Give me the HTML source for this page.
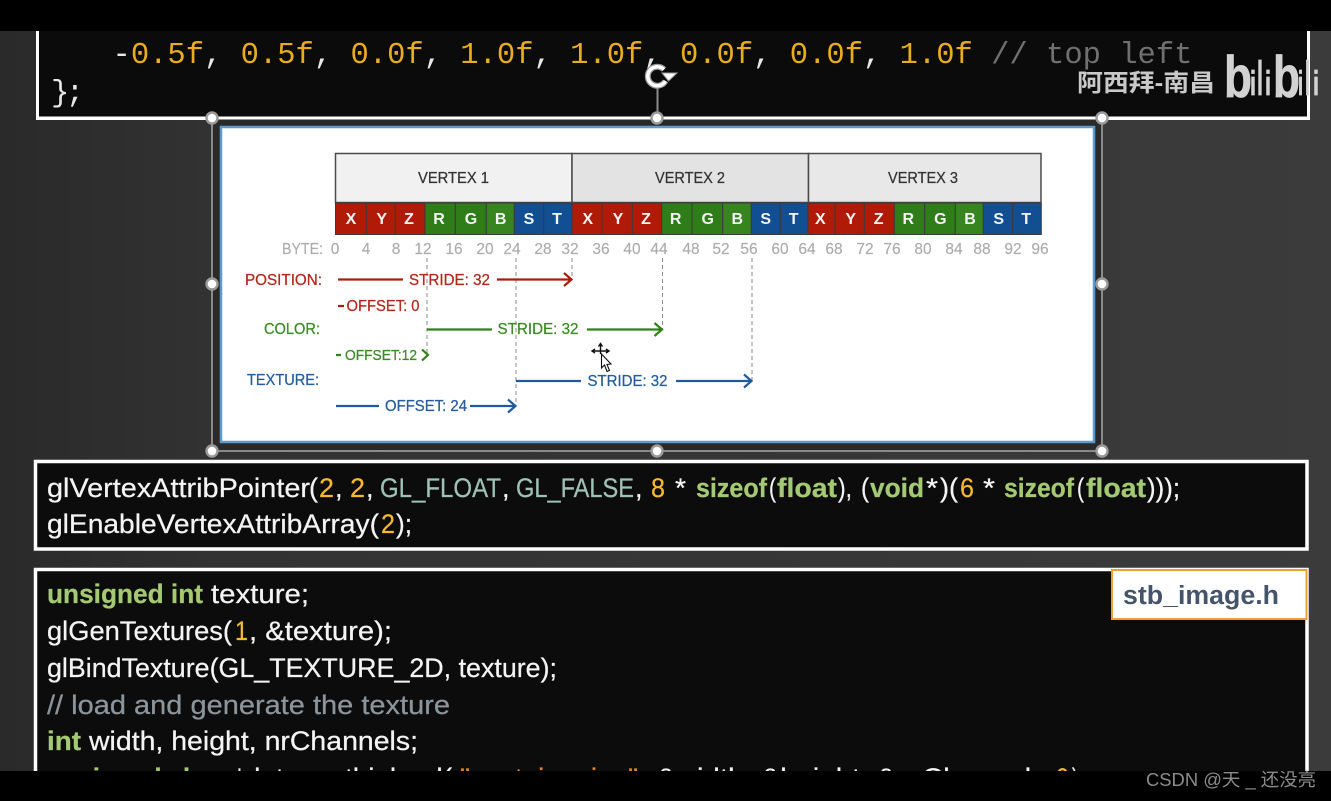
<!DOCTYPE html>
<html>
<head>
<meta charset="utf-8">
<style>
html,body{margin:0;padding:0;width:1331px;height:801px;overflow:hidden;background:#000}
svg{display:block}
text{font-family:"Liberation Sans","Noto Sans CJK SC",sans-serif}
.c text{font-size:27px;fill:#f4f4f4;stroke:#f4f4f4;stroke-width:.25}
.c text.o{fill:#f5b82e;stroke:#f5b82e}
.c text.g{fill:#a4c973;stroke:#a4c973;font-weight:bold}
.c text.t{fill:#9fc2b5;stroke:#9fc2b5}
.c text.gray{fill:#8b959c;stroke:#8b959c}
.c text.s{fill:#f08a1e;stroke:#f08a1e}
.m text{font-family:"Liberation Mono",monospace;font-size:30.5px}
.cell{font-size:16px;font-weight:bold;fill:#f4f4f4;text-anchor:middle}
.b text{font-size:15.5px;fill:#ababab;stroke:#ababab;stroke-width:.15;text-anchor:middle}
.l{font-size:15.5px}
.lg text{stroke-width:.25}
.h{fill:#fff;stroke:#9a9a9a;stroke-width:2.4}
.bl text{font-weight:bold;fill:#d2d2d2;stroke:#d2d2d2;stroke-width:.8}
</style>
</head>
<body>
<svg width="1331" height="801" viewBox="0 0 1331 801" xmlns="http://www.w3.org/2000/svg">
<defs>
<linearGradient id="bg" x1="0" x2="1" y1="0" y2="0">
<stop offset="0" stop-color="#2a2a2a"/><stop offset=".16" stop-color="#323232"/><stop offset="1" stop-color="#3b3b3b"/>
</linearGradient>
</defs>
<rect width="1331" height="801" fill="url(#bg)"/>

<!-- top panel -->
<rect x="37.500" y="20" width="1271" height="98.500" fill="#0b0b0b" stroke="#fff" stroke-width="3"/>
<g class="m">
<text x="112.500" y="63" xml:space="preserve"><tspan fill="#e8e8e8">-</tspan><tspan fill="#e8ac1c">0.5f</tspan><tspan fill="#e8e8e8">, </tspan><tspan fill="#e8ac1c">0.5f</tspan><tspan fill="#e8e8e8">, </tspan><tspan fill="#e8ac1c">0.0f</tspan><tspan fill="#e8e8e8">, </tspan><tspan fill="#e8ac1c">1.0f</tspan><tspan fill="#e8e8e8">, </tspan><tspan fill="#e8ac1c">1.0f</tspan><tspan fill="#e8e8e8">, </tspan><tspan fill="#e8ac1c">0.0f</tspan><tspan fill="#e8e8e8">, </tspan><tspan fill="#e8ac1c">0.0f</tspan><tspan fill="#e8e8e8">, </tspan><tspan fill="#e8ac1c">1.0f</tspan><tspan fill="#707070"> // top left</tspan></text>
<text x="51" y="101" fill="#e8e8e8" textLength="33" lengthAdjust="spacing">};</text>
</g>
<text x="1077" y="91" font-size="24" font-weight="bold" fill="#c9c9c9" textLength="138" lengthAdjust="spacingAndGlyphs">阿西拜-南昌</text>
<g class="bl">
<text x="1224" y="97" font-size="58" textLength="28" lengthAdjust="spacingAndGlyphs">b</text>
<text x="1250" y="95" font-size="34" textLength="6" lengthAdjust="spacingAndGlyphs">i</text>
<text x="1257" y="95" font-size="48" textLength="6" lengthAdjust="spacingAndGlyphs">l</text>
<text x="1265" y="95" font-size="34" textLength="6" lengthAdjust="spacingAndGlyphs">i</text>
<text x="1273" y="97" font-size="58" textLength="27" lengthAdjust="spacingAndGlyphs">b</text>
<text x="1298" y="95" font-size="34" textLength="5" lengthAdjust="spacingAndGlyphs">i</text>
<text x="1305" y="95" font-size="48" textLength="5" lengthAdjust="spacingAndGlyphs">l</text>
<text x="1313" y="95" font-size="34" textLength="6" lengthAdjust="spacingAndGlyphs">i</text>
</g>

<!-- selection band -->
<rect x="212" y="118" width="890" height="333" fill="#2a2a2a" stroke="#8a8a8a" stroke-width="2"/>
<rect x="37" y="116.500" width="1272" height="3" fill="#fff"/>
<rect x="221" y="127" width="873" height="315" fill="#fff" stroke="#5b9bd0" stroke-width="2.500"/>

<!-- diagram -->
<rect x="335.500" y="153.500" width="236.500" height="49" fill="#f1f1f1" stroke="#4a4a4a" stroke-width="1.500"/>
<rect x="572" y="153.500" width="236.500" height="49" fill="#e3e3e3" stroke="#4a4a4a" stroke-width="1.500"/>
<rect x="808.500" y="153.500" width="232.500" height="49" fill="#e8e8e8" stroke="#4a4a4a" stroke-width="1.500"/>
<g class="lg" stroke="#333">
<text x="418" y="183" font-size="16" fill="#333" stroke-width=".2" textLength="71" lengthAdjust="spacingAndGlyphs">VERTEX 1</text>
<text x="655" y="183" font-size="16" fill="#333" stroke-width=".2" textLength="70" lengthAdjust="spacingAndGlyphs">VERTEX 2</text>
<text x="888" y="183" font-size="16" fill="#333" stroke-width=".2" textLength="70" lengthAdjust="spacingAndGlyphs">VERTEX 3</text>
</g>

<g stroke="#3a3a3a" stroke-width="1">
<rect x="335.500" y="203" width="30.800" height="31.500" fill="#b01b08"/><rect x="366.300" y="203" width="29" height="31.500" fill="#b01b08"/><rect x="395.300" y="203" width="29.700" height="31.500" fill="#b01b08"/>
<rect x="425" y="203" width="30.300" height="31.500" fill="#2f7d18"/><rect x="455.300" y="203" width="31" height="31.500" fill="#2f7d18"/><rect x="486.300" y="203" width="28" height="31.500" fill="#37851e"/>
<rect x="514.300" y="203" width="29.400" height="31.500" fill="#114f92"/><rect x="543.700" y="203" width="28.300" height="31.500" fill="#114f92"/>
<rect x="572" y="203" width="30" height="31.500" fill="#b01b08"/><rect x="602" y="203" width="30.300" height="31.500" fill="#b01b08"/><rect x="632.300" y="203" width="29.400" height="31.500" fill="#b01b08"/>
<rect x="661.700" y="203" width="30.300" height="31.500" fill="#2f7d18"/><rect x="692" y="203" width="30.700" height="31.500" fill="#2f7d18"/><rect x="722.700" y="203" width="28.600" height="31.500" fill="#37851e"/>
<rect x="751.300" y="203" width="29" height="31.500" fill="#114f92"/><rect x="780.300" y="203" width="27.700" height="31.500" fill="#114f92"/>
<rect x="808" y="203" width="27" height="31.500" fill="#b01b08"/><rect x="835" y="203" width="29.300" height="31.500" fill="#b01b08"/><rect x="864.300" y="203" width="30" height="31.500" fill="#b01b08"/>
<rect x="894.300" y="203" width="30.400" height="31.500" fill="#2f7d18"/><rect x="924.700" y="203" width="30.600" height="31.500" fill="#2f7d18"/><rect x="955.300" y="203" width="28" height="31.500" fill="#37851e"/>
<rect x="983.300" y="203" width="29.400" height="31.500" fill="#114f92"/><rect x="1012.700" y="203" width="28.600" height="31.500" fill="#114f92"/>
</g>
<g>
<text class="cell" x="351" y="224">X</text><text class="cell" x="381.700" y="224">Y</text><text class="cell" x="409" y="224">Z</text><text class="cell" x="439" y="224">R</text><text class="cell" x="471" y="224">G</text><text class="cell" x="500.700" y="224">B</text><text class="cell" x="529" y="224">S</text><text class="cell" x="557" y="224">T</text>
<text class="cell" x="587.700" y="224">X</text><text class="cell" x="618" y="224">Y</text><text class="cell" x="646" y="224">Z</text><text class="cell" x="675.700" y="224">R</text><text class="cell" x="707.700" y="224">G</text><text class="cell" x="737.300" y="224">B</text><text class="cell" x="765.700" y="224">S</text><text class="cell" x="793.700" y="224">T</text>
<text class="cell" x="820.300" y="224">X</text><text class="cell" x="850.700" y="224">Y</text><text class="cell" x="878.700" y="224">Z</text><text class="cell" x="908.300" y="224">R</text><text class="cell" x="940.300" y="224">G</text><text class="cell" x="970" y="224">B</text><text class="cell" x="998.700" y="224">S</text><text class="cell" x="1026.300" y="224">T</text>
</g>
<g class="b">
<text x="302.500" y="254" textLength="41" lengthAdjust="spacingAndGlyphs">BYTE:</text><text x="335" y="254">0</text><text x="366" y="254">4</text><text x="396" y="254">8</text><text x="423" y="254">12</text><text x="454" y="254">16</text><text x="485" y="254">20</text><text x="512" y="254">24</text><text x="543" y="254">28</text><text x="570" y="254">32</text><text x="601" y="254">36</text><text x="632" y="254">40</text><text x="659" y="254">44</text><text x="691" y="254">48</text><text x="721" y="254">52</text><text x="749" y="254">56</text><text x="780" y="254">60</text><text x="807" y="254">64</text><text x="834" y="254">68</text><text x="865" y="254">72</text><text x="892" y="254">76</text><text x="923" y="254">80</text><text x="954" y="254">84</text><text x="982" y="254">88</text><text x="1013" y="254">92</text><text x="1040" y="254">96</text>
</g>
<g stroke="#8a8a8a" stroke-width="1" stroke-dasharray="4 3" fill="none">
<path d="M427 258V355M516 258V406M572 258V280M662.500 258V329M752 258V381"/>
</g>
<!-- position -->
<g class="lg" fill="#b1281a" stroke="#b1281a">
<text class="l" x="245" y="285" textLength="77" lengthAdjust="spacingAndGlyphs">POSITION:</text>
<text class="l" x="409" y="285" textLength="81" lengthAdjust="spacingAndGlyphs">STRIDE: 32</text>
<text class="l" x="346.500" y="311" textLength="73" lengthAdjust="spacingAndGlyphs">OFFSET: 0</text>
</g>
<path d="M338 279.500H403M497 279.500H571M564 273L571.500 279.500L564 286M338 306H344" fill="none" stroke="#ad1c0a" stroke-width="2.200"/>
<!-- color -->
<g class="lg" fill="#3a8a25" stroke="#3a8a25">
<text class="l" x="264" y="334" textLength="56" lengthAdjust="spacingAndGlyphs">COLOR:</text>
<text class="l" x="497.500" y="334" textLength="81" lengthAdjust="spacingAndGlyphs">STRIDE: 32</text>
<text x="345" y="360" font-size="14.500" textLength="72" lengthAdjust="spacingAndGlyphs">OFFSET:12</text>
</g>
<path d="M427 329.500H492M587 329.500H661.500M654.500 323L662 329.500L654.500 336M336 355H341M422 349.500L428 355L422 360.500" fill="none" stroke="#2f8119" stroke-width="2.200"/>
<!-- texture -->
<g class="lg" fill="#245c9c" stroke="#245c9c">
<text class="l" x="247" y="385" textLength="72" lengthAdjust="spacingAndGlyphs">TEXTURE:</text>
<text class="l" x="587.500" y="386" textLength="80" lengthAdjust="spacingAndGlyphs">STRIDE: 32</text>
<text class="l" x="385" y="411" textLength="82" lengthAdjust="spacingAndGlyphs">OFFSET: 24</text>
</g>
<path d="M516 381H581M676 381H751M744 374.500L751.500 381L744 387.500M336 406H379M470 406H515M508 399.500L515.500 406L508 412.500" fill="none" stroke="#1f5a9e" stroke-width="2.200"/>
<!-- cursor -->
<path d="M600.500 344V354M592.500 351H609M598.500 346.500L600.500 343.500L602.500 346.500M595 349L592 351L595 353M606 349L609 351L606 353" fill="none" stroke="#111" stroke-width="1.400"/>
<path d="M601.500 354L601.500 368L604.500 365L607 371.500L609.500 370.500L607 364.500L611 364Z" fill="#fff" stroke="#111" stroke-width="1.100"/>

<!-- rotate handle -->
<path d="M657.500 87V113" stroke="#8c8c8c" stroke-width="2"/>
<path d="M664 69.500A9.500 9.500 0 1 0 665.500 81" fill="none" stroke="#9a9a9a" stroke-width="6"/>
<path d="M664 69.500A9.500 9.500 0 1 0 665.500 81" fill="none" stroke="#fff" stroke-width="3.500"/>
<path d="M662 73H677L668.500 81Z" fill="#fff" stroke="#9a9a9a" stroke-width="1"/>
<!-- handles -->
<circle class="h" cx="212" cy="118" r="5.500"/><circle class="h" cx="657" cy="118" r="5.500"/><circle class="h" cx="1102" cy="118" r="5.500"/>
<circle class="h" cx="212" cy="284" r="5.500"/><circle class="h" cx="1102" cy="284" r="5.500"/>
<circle class="h" cx="212" cy="451" r="5.500"/><circle class="h" cx="657" cy="451" r="5.500"/><circle class="h" cx="1102" cy="451" r="5.500"/>

<!-- middle panel -->
<rect x="35.500" y="461.500" width="1271.500" height="87.500" fill="#0c0c0c" stroke="#fff" stroke-width="3.500"/>
<g class="c">
<text x="47" y="497" textLength="263" lengthAdjust="spacingAndGlyphs">glVertexAttribPointer</text>
<text x="309" y="497">(</text>
<text class="o" x="319" y="497" textLength="15" lengthAdjust="spacingAndGlyphs">2</text><text x="335" y="497">,</text>
<text class="o" x="350" y="497" textLength="15" lengthAdjust="spacingAndGlyphs">2</text><text x="366" y="497">,</text>
<text class="t" x="380" y="497" textLength="121" lengthAdjust="spacingAndGlyphs">GL_FLOAT</text><text x="502" y="497">,</text>
<text class="t" x="516" y="497" textLength="118" lengthAdjust="spacingAndGlyphs">GL_FALSE</text><text x="635" y="497">,</text>
<text class="o" x="651" y="497" textLength="14" lengthAdjust="spacingAndGlyphs">8</text>
<text x="675" y="497" textLength="11" lengthAdjust="spacingAndGlyphs">*</text>
<text class="g" x="696" y="497" textLength="71" lengthAdjust="spacingAndGlyphs">sizeof</text><text x="769" y="497" textLength="7" lengthAdjust="spacingAndGlyphs">(</text>
<text class="g" x="777" y="497" textLength="60" lengthAdjust="spacingAndGlyphs">float</text><text x="838" y="497" textLength="14" lengthAdjust="spacingAndGlyphs">),</text>
<text x="861" y="497" textLength="8" lengthAdjust="spacingAndGlyphs">(</text>
<text class="g" x="870" y="497" textLength="54" lengthAdjust="spacingAndGlyphs">void</text>
<text x="926" y="497" textLength="12" lengthAdjust="spacingAndGlyphs">*</text><text x="940" y="497" textLength="18" lengthAdjust="spacing">)(</text>
<text class="o" x="960" y="497" textLength="14" lengthAdjust="spacingAndGlyphs">6</text>
<text x="983" y="497" textLength="12" lengthAdjust="spacingAndGlyphs">*</text>
<text class="g" x="1004" y="497" textLength="70" lengthAdjust="spacingAndGlyphs">sizeof</text><text x="1077" y="497" textLength="7" lengthAdjust="spacingAndGlyphs">(</text>
<text class="g" x="1086" y="497" textLength="60" lengthAdjust="spacingAndGlyphs">float</text>
<text x="1147" y="497" textLength="33" lengthAdjust="spacingAndGlyphs">)));</text>

<text x="47" y="533" textLength="332" lengthAdjust="spacingAndGlyphs">glEnableVertexAttribArray(</text>
<text class="o" x="381" y="533" textLength="14" lengthAdjust="spacingAndGlyphs">2</text>
<text x="396" y="533" textLength="16" lengthAdjust="spacingAndGlyphs">);</text>
</g>

<!-- bottom panel -->
<rect x="35.500" y="569.500" width="1271.500" height="240" fill="#0c0c0c" stroke="#fff" stroke-width="3.500"/>
<g class="c">
<text class="g" x="47" y="603" textLength="156" lengthAdjust="spacingAndGlyphs">unsigned int</text>
<text x="211" y="603" textLength="98" lengthAdjust="spacingAndGlyphs">texture;</text>

<text x="47" y="640" textLength="185" lengthAdjust="spacingAndGlyphs">glGenTextures(</text>
<text class="o" x="235" y="640" textLength="13" lengthAdjust="spacingAndGlyphs">1</text>
<text x="249" y="640" textLength="143" lengthAdjust="spacingAndGlyphs">, &amp;texture);</text>

<text x="47" y="677" textLength="510" lengthAdjust="spacingAndGlyphs">glBindTexture(GL_TEXTURE_2D, texture);</text>

<text class="gray" x="47" y="714" textLength="403" lengthAdjust="spacingAndGlyphs">// load and generate the texture</text>

<text class="g" x="47" y="750" textLength="34" lengthAdjust="spacingAndGlyphs">int</text>
<text x="89" y="750" textLength="329" lengthAdjust="spacingAndGlyphs">width, height, nrChannels;</text>

<text class="g" x="47" y="787" textLength="176" lengthAdjust="spacingAndGlyphs">unsigned char</text>
<text x="234" y="787" textLength="218" lengthAdjust="spacingAndGlyphs">*data = stbi_load(</text>
<text class="s" x="460" y="787" textLength="178" lengthAdjust="spacingAndGlyphs">"container.jpg"</text>
<text x="640" y="787" textLength="414" lengthAdjust="spacingAndGlyphs">, &amp;width, &amp;height, &amp;nrChannels,</text>
<text class="o" x="1056" y="787" textLength="13" lengthAdjust="spacingAndGlyphs">0</text>
<text x="1072" y="787" textLength="6" lengthAdjust="spacingAndGlyphs">)</text>
</g>

<!-- stb label -->
<rect x="1112" y="570" width="194.500" height="49" fill="#fff" stroke="#f0a033" stroke-width="2"/>
<text x="1123" y="604" font-size="25.500" font-weight="bold" fill="#44546a" textLength="156" lengthAdjust="spacingAndGlyphs">stb_image.h</text>

<!-- letterbox -->
<rect x="0" y="0" width="1331" height="31" fill="#000"/>
<rect x="0" y="771" width="1331" height="30" fill="#000"/>
<text x="1146" y="786" font-size="18" fill="#8c8c8c" textLength="170" lengthAdjust="spacingAndGlyphs">CSDN @天 _ 还没亮</text>
</svg>
</body>
</html>
